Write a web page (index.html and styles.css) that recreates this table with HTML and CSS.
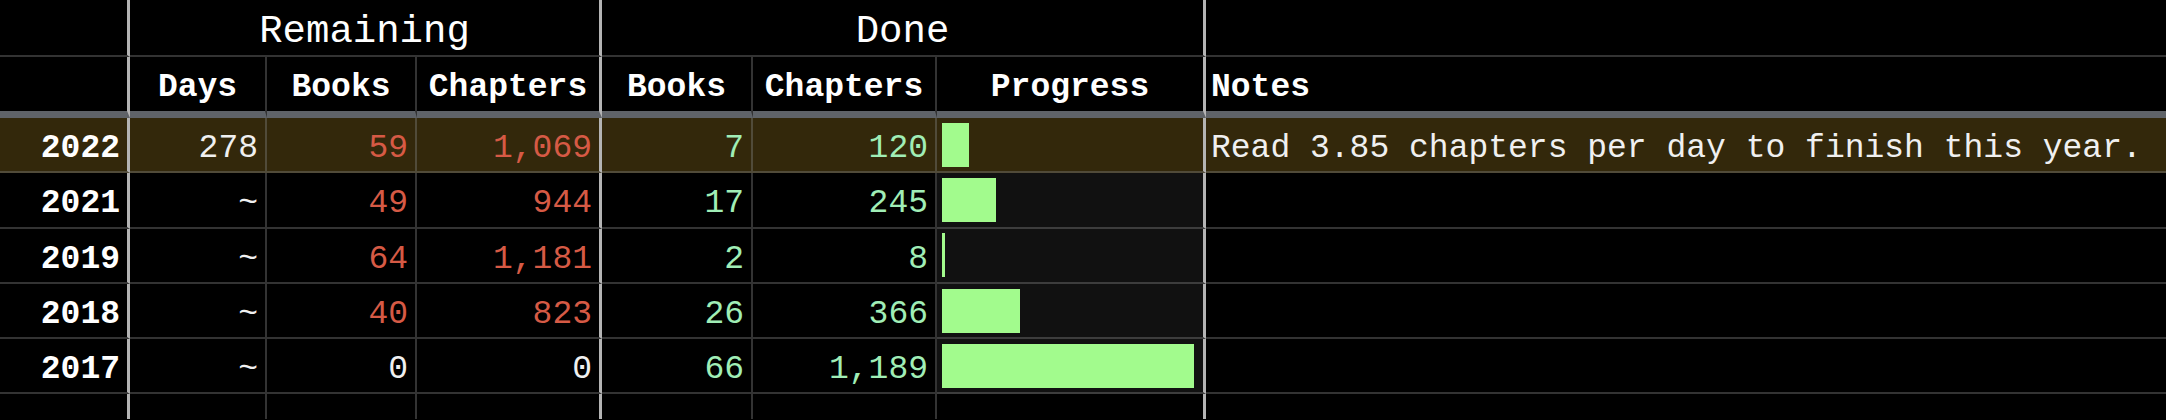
FILE: index.html
```html
<!DOCTYPE html>
<html lang="en">
<head>
<meta charset="utf-8">
<title>Reading progress</title>
<link rel="stylesheet" href="styles.css">
</head>
<body>
<div class="sheet">
  <div class="c h1 sep"></div>
  <div class="c h1 group span3 sep">Remaining</div>
  <div class="c h1 group span3 sep">Done</div>
  <div class="c h1 last"></div>

  <div class="c h2 sep"></div>
  <div class="c h2 center">Days</div>
  <div class="c h2 center">Books</div>
  <div class="c h2 center sep">Chapters</div>
  <div class="c h2 center">Books</div>
  <div class="c h2 center">Chapters</div>
  <div class="c h2 center sep">Progress</div>
  <div class="c h2 left last">Notes</div>

  <div class="c hl year sep">2022</div>
  <div class="c hl">278</div>
  <div class="c hl red">59</div>
  <div class="c hl red sep">1,069</div>
  <div class="c hl green">7</div>
  <div class="c hl green">120</div>
  <div class="c hl prog sep"><div class="bar" style="width:27px"></div></div>
  <div class="c hl left last">Read 3.85 chapters per day to finish this year.</div>

  <div class="c year sep">2021</div>
  <div class="c">~</div>
  <div class="c red">49</div>
  <div class="c red sep">944</div>
  <div class="c green">17</div>
  <div class="c green">245</div>
  <div class="c prog track sep"><div class="bar" style="width:54px"></div></div>
  <div class="c left last"></div>

  <div class="c year sep">2019</div>
  <div class="c">~</div>
  <div class="c red">64</div>
  <div class="c red sep">1,181</div>
  <div class="c green">2</div>
  <div class="c green">8</div>
  <div class="c prog track sep"><div class="bar" style="width:3px"></div></div>
  <div class="c left last"></div>

  <div class="c year sep">2018</div>
  <div class="c">~</div>
  <div class="c red">40</div>
  <div class="c red sep">823</div>
  <div class="c green">26</div>
  <div class="c green">366</div>
  <div class="c prog track sep"><div class="bar" style="width:78px"></div></div>
  <div class="c left last"></div>

  <div class="c year sep">2017</div>
  <div class="c">~</div>
  <div class="c">0</div>
  <div class="c sep">0</div>
  <div class="c green">66</div>
  <div class="c green">1,189</div>
  <div class="c prog track sep"><div class="bar" style="width:252px"></div></div>
  <div class="c left last"></div>

  <div class="c end sep"></div>
  <div class="c end"></div>
  <div class="c end"></div>
  <div class="c end sep"></div>
  <div class="c end"></div>
  <div class="c end"></div>
  <div class="c end sep"></div>
  <div class="c end last"></div>
</div>
</body>
</html>
```

FILE: styles.css
```css
html, body {
  margin: 0;
  padding: 0;
  background: #000;
}

body {
  width: 2166px;
  height: 420px;
  overflow: hidden;
  font-family: "Liberation Mono", "DejaVu Sans Mono", monospace;
  font-size: 33px;
  color: #f0f0f0;
}

.sheet {
  display: grid;
  grid-template-columns: 130px 137px 150px 185px 151px 184px 269px 1fr;
  grid-template-rows: 57px 61px repeat(5, 55.3px) 25px;
}

.c {
  box-sizing: border-box;
  display: flex;
  align-items: center;
  justify-content: flex-end;
  padding: 8px 7px 0 7px;
  border-right: 2px solid rgba(128, 128, 128, 0.4);
  border-bottom: 2px solid rgba(128, 128, 128, 0.4);
  white-space: nowrap;
  overflow: hidden;
}

.sep {
  border-right: 3px solid #b4b4b4;
}

.last {
  border-right: 0;
}

.span3 {
  grid-column: span 3;
}

.h1 {
  padding-top: 8px;
}

.group {
  justify-content: center;
  font-size: 39px;
  color: #fff;
}

.h2 {
  font-weight: bold;
  color: #fff;
  padding-top: 7px;
  border-bottom: 7px solid #5f6368;
}

.center {
  justify-content: center;
  padding-left: 0;
  padding-right: 0;
}

.left {
  justify-content: flex-start;
  padding-left: 5px;
}

.hl {
  background: #33280b;
}

.year {
  font-weight: bold;
  color: #fff;
}

.red {
  color: #d65a45;
}

.green {
  color: #a0eeb6;
}

.prog {
  justify-content: flex-start;
  padding: 0 0 0 5px;
}

.track {
  background: #111;
}

.bar {
  height: 44px;
  background: #a2fb8d;
}

.end {
  border-bottom: 0;
  padding: 0;
}
```
